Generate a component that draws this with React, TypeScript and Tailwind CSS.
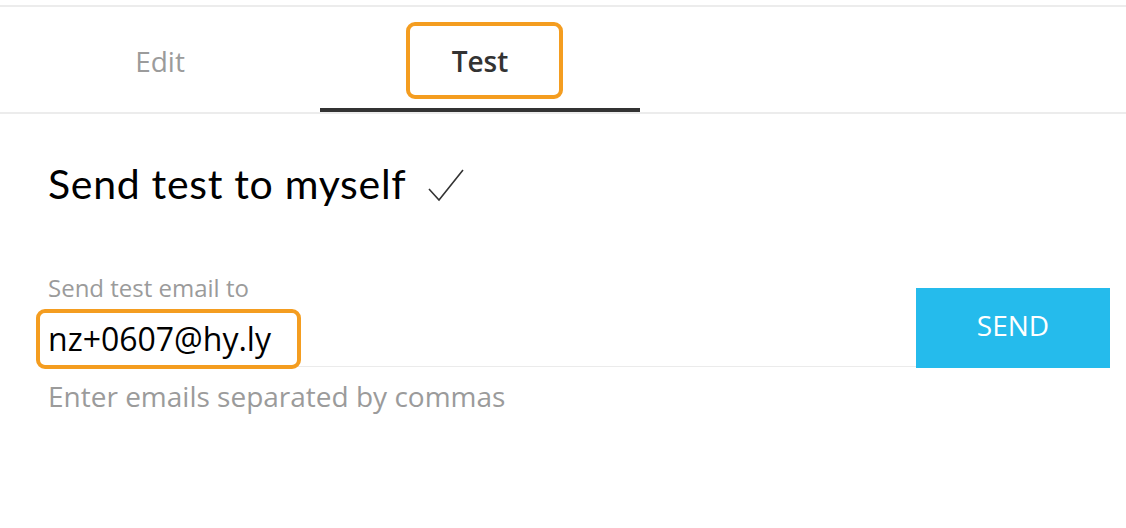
export default function App() {
  return (
    <div className="w-[1126px] h-[528px] bg-white font-['Open_Sans',sans-serif] overflow-hidden">
      <div className="pt-[5px]">
        <div className="h-[2px] bg-[#ececec]" />
      </div>

      {/* tabs */}
      <div className="flex h-[107px] border-b-2 border-[#ececec]">
        <div className="w-[320px] flex justify-center pt-[15px]">
          <span className="flex items-center justify-center w-[157px] h-[77px] text-[28px] text-[#9b9b9b]">
            Edit
          </span>
        </div>
        <div className="w-[320px] flex justify-center pt-[15px] border-b-4 border-[#333333]">
          <span className="ml-[9px] flex items-center justify-center w-[157px] h-[77px] pr-[9px] border-4 border-[#f49d20] rounded-[9px] text-[28px] font-semibold text-[#333333]">
            Test
          </span>
        </div>
      </div>

      {/* content */}
      <div className="pl-[48px] pr-[16px] pt-[46px]">
        <div className="flex items-center gap-[21px]">
          <h2 className="font-['Lato',sans-serif] text-[41px] leading-[48px] tracking-[0.7px] text-black">
            Send test to myself
          </h2>
          <svg width="38" height="36" viewBox="0 0 38 36" className="mt-[4px]">
            <path d="M2 21 L12 32 L36 2" fill="none" stroke="#333" strokeWidth="1.6" />
          </svg>
        </div>

        <div className="mt-[66px] flex items-start">
          <div className="flex-1">
            <div className="text-[24px] leading-[28px] text-[#9b9b9b]">Send test email to</div>
            <div className="pt-[7px] border-b-[1.5px] border-[#ebebeb]">
              <div className="-ml-[12px] -mb-[3px] flex items-center w-[265px] h-[60px] pl-[8px] border-4 border-[#f49d20] rounded-[9px] text-[32px] leading-[52px] text-black">
                nz+0607@hy.ly
              </div>
            </div>
          </div>
          <button className="mt-[14px] w-[194px] h-[80px] pb-[6px] bg-[#25bbec] text-white text-[28px] flex items-center justify-center">
            SEND
          </button>
        </div>

        <div className="mt-[10px] text-[28px] leading-[36px] text-[#9b9b9b]">
          Enter emails separated by commas
        </div>
      </div>
    </div>
  );
}
